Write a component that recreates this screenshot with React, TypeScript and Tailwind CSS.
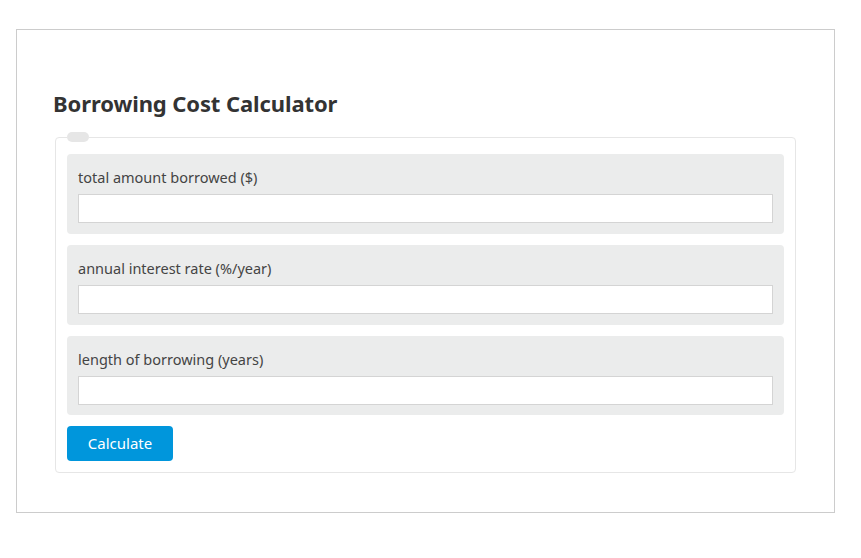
import React from "react";

const fields = [
  "total amount borrowed ($)",
  "annual interest rate (%/year)",
  "length of borrowing (years)",
];

export default function App() {
  return (
    <div className="bg-white min-h-[558px] pt-[29px] pl-[16px]" style={{ fontFamily: '"Noto Sans", "Open Sans", sans-serif' }}>
      <div className="w-[819px] h-[484px] border border-[#cccccc] px-[36px] pt-[57px]">
        <h1 className="text-[22px] leading-[32px] font-bold text-[#333333] mb-[13px] tracking-[-0.1px]">Borrowing Cost Calculator</h1>
        <fieldset className="mx-[2px] w-[741px] border border-[#e6e6e6] rounded-[4px] px-[11px] pt-[12px] pb-[11px]">
          <legend className="w-[22px] h-[10px] rounded-full bg-[#e6e6e6]"></legend>
          <div className="flex flex-col gap-[11px]">
            {fields.map((f, i) => (
              <div key={f} className={`bg-[#ebecec] rounded-[4px] p-[11px] ${i === 2 ? "h-[79px]" : "h-[80px]"}`}>
                <div className="h-[24px] leading-[24px] text-[14.5px] text-[#444444] mb-[5px]">{f}</div>
                <input type="text" className="block w-[695px] h-[29px] bg-white border border-[#d4d4d4] outline-none" />
              </div>
            ))}
            <button className="w-[106px] h-[35px] rounded-[4px] bg-[#0096dc] text-white text-[15px]">Calculate</button>
          </div>
        </fieldset>
      </div>
    </div>
  );
}
